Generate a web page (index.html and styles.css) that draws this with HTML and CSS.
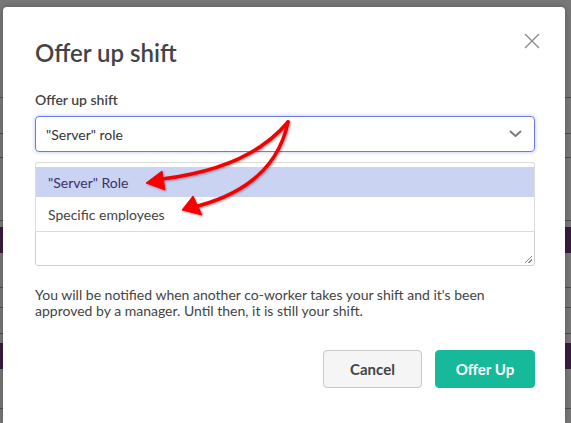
FILE: index.html
```html
<!DOCTYPE html>
<html>
<head>
<meta charset="utf-8">
<link rel="stylesheet" href="styles.css">
</head>
<body>
<div class="page">
  <div class="row r1"></div>
  <div class="row r2"></div>
  <div class="row r3"></div>
  <div class="row r4"></div>
  <div class="row r5"></div>
  <div class="row purple"></div>
  <div class="row r6"></div>
  <div class="row r7"></div>
  <div class="row r8"></div>
  <div class="row r9"></div>
  <div class="row purple"></div>
  <div class="row r10"></div>
</div>
<div class="overlay"></div>
<div class="modal">
  <button class="close" aria-label="Close">
    <svg width="16" height="16" viewBox="0 0 16 16"><path d="M1 1L15 15M15 1L1 15" stroke="#8c8c8c" stroke-width="1.4" fill="none"/></svg>
  </button>
  <h1 class="title">Offer up shift</h1>
  <label class="label">Offer up shift</label>
  <div class="select">
    <span>"Server" role</span>
    <svg width="13" height="8" viewBox="0 0 13 8"><path d="M1.5 1.5L6.5 6L11.5 1.5" stroke="#7a7a7a" stroke-width="1.9" fill="none" stroke-linecap="round" stroke-linejoin="round"/></svg>
  </div>
  <div class="field">
    <div class="textarea"><span class="grip"></span></div>
    <ul class="menu">
      <li class="item active">"Server" Role</li>
      <li class="item">Specific employees</li>
    </ul>
  </div>
  <p class="note">You will be notified when another co-worker takes your shift and it's been approved by a manager. Until then, it is still your shift.</p>
  <div class="actions">
    <button class="btn cancel">Cancel</button>
    <button class="btn primary">Offer Up</button>
  </div>
</div>
<svg class="arrows" width="571" height="423" viewBox="0 0 571 423">
  <defs>
    <filter id="sh" x="-10%" y="-10%" width="120%" height="120%">
      <feDropShadow dx="1" dy="1" stdDeviation="0.8" flood-color="#000" flood-opacity="0.35"/>
    </filter>
  </defs>
  <g filter="url(#sh)" fill="#f40000" stroke="#f40000">
    <path d="M288 122 Q250 168 162 179" fill="none" stroke-width="3.6" stroke-linecap="round"/>
    <path d="M146 183 L162 171 L165 190 Z" stroke-width="1" stroke-linejoin="round"/>
    <path d="M288 122 Q275 185 198 206" fill="none" stroke-width="3.6" stroke-linecap="round"/>
    <path d="M182 210 L193 196 L202 215 Z" stroke-width="1" stroke-linejoin="round"/>
  </g>
</svg>
</body>
</html>
```
FILE: styles.css
```css
* { box-sizing: border-box; }
html, body { margin: 0; padding: 0; }
body {
  width: 571px;
  height: 423px;
  overflow: hidden;
  position: relative;
  background: #ffffff;
  font-family: "Lato", "Open Sans", sans-serif;
}
.page {
  display: flex;
  flex-direction: column;
}
.row { flex: none; border-bottom: 1px solid #a8a8a8; background: #fff; }
.r1 { height: 98px; }
.r2 { height: 36px; }
.r3 { height: 24px; }
.r4 { height: 63px; }
.r5 { height: 6px; border-bottom: none; }
.purple { height: 26px; background: #7a3d86; border-bottom: none; }
.r6 { height: 35px; }
.r7 { height: 20px; }
.r8 { height: 26px; }
.r9 { height: 9px; border-bottom: none; }
.r10 { height: 40px; }
.overlay {
  position: absolute;
  inset: 0;
  background: rgba(0, 0, 0, 0.53);
}
.modal {
  position: absolute;
  left: 3px;
  top: 7px;
  width: 562px;
  height: 416px;
  background: #fff;
  border-radius: 4px 4px 0 0;
  padding: 31px 30px 0 32px;
  color: #444;
  box-shadow: 0 0 6px rgba(0,0,0,0.25);
}
.close {
  position: absolute;
  top: 26px;
  right: 25px;
  padding: 0;
  border: 0;
  background: none;
  width: 16px;
  height: 16px;
  display: block;
}
.close svg { display: block; }
.title {
  margin: 0;
  font-size: 24px;
  line-height: 30px;
  font-weight: 600;
  color: #444;
}
.label {
  display: block;
  margin-top: 23px;
  font-size: 14px;
  line-height: 17px;
  font-weight: 600;
  color: #444;
}
.select {
  margin-top: 8px;
  height: 36px;
  border: 1px solid #6a7ce0;
  border-radius: 4px;
  box-shadow: 0 0 4px rgba(106, 124, 224, 0.45);
  display: flex;
  align-items: center;
  justify-content: space-between;
  padding: 0 12px 0 10px;
  font-size: 14px;
  color: #333;
}
.select svg { display: block; }
.field {
  position: relative;
  margin-top: 10px;
}
.textarea {
  height: 104px;
  border: 1px solid #cfcfcf;
  border-radius: 3px;
  position: relative;
}
.grip {
  position: absolute;
  right: 2px;
  bottom: 2px;
  width: 7px;
  height: 7px;
  background: linear-gradient(135deg, transparent 45%, #888 45%, #888 55%, transparent 55%, transparent 70%, #888 70%, #888 80%, transparent 80%);
}
.menu {
  position: absolute;
  left: 0;
  right: 0;
  top: 0;
  margin: 0;
  padding: 4px 0 0;
  list-style: none;
  background: #fff;
  border: 1px solid #dcdcdc;
  border-radius: 3px 3px 0 0;
}
.item {
  height: 30px;
  padding-left: 12px;
  display: flex;
  align-items: center;
  font-size: 14px;
  color: #444;
}
.item + .item { height: 34px; }
.item.active { background: #cad3f2; color: #3b2f66; }
.note {
  margin: 21px 0 0;
  font-size: 14px;
  line-height: 16px;
  color: #444;
}
.actions {
  margin-top: 31px;
  display: flex;
  justify-content: flex-end;
  gap: 13px;
}
.btn {
  height: 38px;
  width: 99px;
  border-radius: 4px;
  font-family: inherit;
  font-size: 15px;
  font-weight: 700;
  cursor: pointer;
}
.cancel {
  background: #f5f5f5;
  border: 1px solid #c8c8c8;
  color: #444;
}
.primary {
  width: 100px;
  background: #17b99b;
  border: 1px solid #17b99b;
  color: #fff;
}
.arrows {
  position: absolute;
  left: 0;
  top: 0;
  pointer-events: none;
}
```
